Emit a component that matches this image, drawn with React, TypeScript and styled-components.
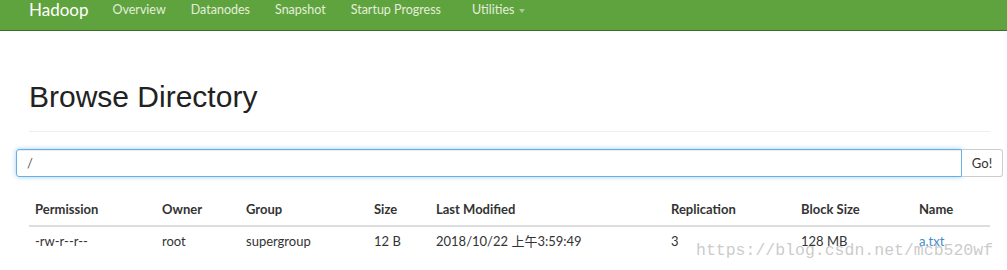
import React from "react";
import styled, { createGlobalStyle } from "styled-components";

const Global = createGlobalStyle`
  html, body { margin: 0; padding: 0; background: #fff; }
  body { font-family: Lato, "Noto Sans CJK SC", sans-serif; color: #333; font-size: 13px; }
  * { box-sizing: border-box; }
`;

const Page = styled.div`
  position: relative;
  width: 1007px;
  height: 270px;
  overflow: hidden;
`;

const Navbar = styled.nav`
  height: 31px;
  background: #5fa33e;
  border-bottom: 1px solid #3c6e2a;
  display: flex;
  align-items: flex-start;
  padding-left: 29px;
`;

const Brand = styled.a`
  font-size: 17px;
  line-height: 20px;
  color: #fff;
  margin-right: 24px;
  text-decoration: none;
`;

const NavList = styled.ul`
  display: flex;
  list-style: none;
  margin: 0;
  padding: 0;
`;

const NavItem = styled.li`
  font-size: 12.5px;
  line-height: 20px;
  color: #e4eedd;
  margin-right: 25px;
  display: flex;
  align-items: center;
  gap: 5px;
`;

const WideNavItem = styled(NavItem)`
  margin-right: 31px;
`;

const Caret = styled.span`
  display: inline-block;
  width: 0;
  height: 0;
  border-left: 3.5px solid transparent;
  border-right: 3.5px solid transparent;
  border-top: 4px solid #a9c99a;
  margin-top: 1px;
`;

const Container = styled.main`
  padding: 0 17px 0 29px;
`;

const Header = styled.div`
  padding-top: 48px;
  border-bottom: 1px solid #eee;
  padding-bottom: 16px;
`;

const Title = styled.h1`
  margin: 0;
  font-family: "Liberation Sans", Arial, sans-serif;
  font-weight: 400;
  font-size: 30px;
  line-height: 36px;
  color: #222;
`;

const InputGroup = styled.div`
  display: flex;
  margin: 17px -13px 0 -13px;
  height: 28px;
`;

const PathInput = styled.div`
  flex: 1;
  border: 1px solid #66afe9;
  border-radius: 3px 0 0 3px;
  box-shadow: inset 0 1px 1px rgba(0,0,0,.075), 0 0 5px rgba(102,175,233,.6);
  padding: 0 10px;
  display: flex;
  align-items: center;
  font-size: 13px;
  color: #555;
`;

const GoButton = styled.button`
  width: 41px;
  border: 1px solid #ccc;
  border-left: none;
  border-radius: 0 3px 3px 0;
  background: #fff;
  font-family: Lato, sans-serif;
  font-size: 13px;
  color: #333;
  padding: 0;
`;

const Table = styled.div`
  margin-top: 16px;
  width: 961px;
  display: grid;
  grid-template-columns: 127px 84px 128px 62px 235px 130px 118px 77px;
`;

const HeadCell = styled.div`
  font-weight: 700;
  font-size: 13px;
  color: #333;
  padding: 0 6px;
  height: 34px;
  line-height: 32px;
  border-bottom: 2px solid #ddd;
`;

const Cell = styled.div`
  font-size: 13px;
  color: #333;
  padding: 0 6px;
  height: 29px;
  line-height: 29px;
  white-space: nowrap;
`;

const Link = styled.a`
  color: #428bca;
  text-decoration: none;
`;

const Watermark = styled.div`
  position: absolute;
  left: 696px;
  top: 241px;
  font-family: "Liberation Mono", monospace;
  font-size: 16.5px;
  color: rgba(185, 185, 185, 0.75);
  white-space: nowrap;
  pointer-events: none;
`;

const headers = ["Permission", "Owner", "Group", "Size", "Last Modified", "Replication", "Block Size", "Name"];
const row = ["-rw-r--r--", "root", "supergroup", "12 B", "2018/10/22 上午3:59:49", "3", "128 MB"];

export default function App() {
  return (
    <Page>
      <Global />
      <Navbar>
        <Brand>Hadoop</Brand>
        <NavList>
          <NavItem>Overview</NavItem>
          <NavItem>Datanodes</NavItem>
          <NavItem>Snapshot</NavItem>
          <WideNavItem>Startup Progress</WideNavItem>
          <NavItem>Utilities <Caret /></NavItem>
        </NavList>
      </Navbar>
      <Container>
        <Header>
          <Title>Browse Directory</Title>
        </Header>
        <InputGroup>
          <PathInput>/</PathInput>
          <GoButton>Go!</GoButton>
        </InputGroup>
        <Table>
          {headers.map((h) => (
            <HeadCell key={h}>{h}</HeadCell>
          ))}
          {row.map((c, i) => (
            <Cell key={i}>{c}</Cell>
          ))}
          <Cell>
            <Link>a.txt</Link>
          </Cell>
        </Table>
      </Container>
      <Watermark>https://blog.csdn.net/mcb520wf</Watermark>
    </Page>
  );
}
